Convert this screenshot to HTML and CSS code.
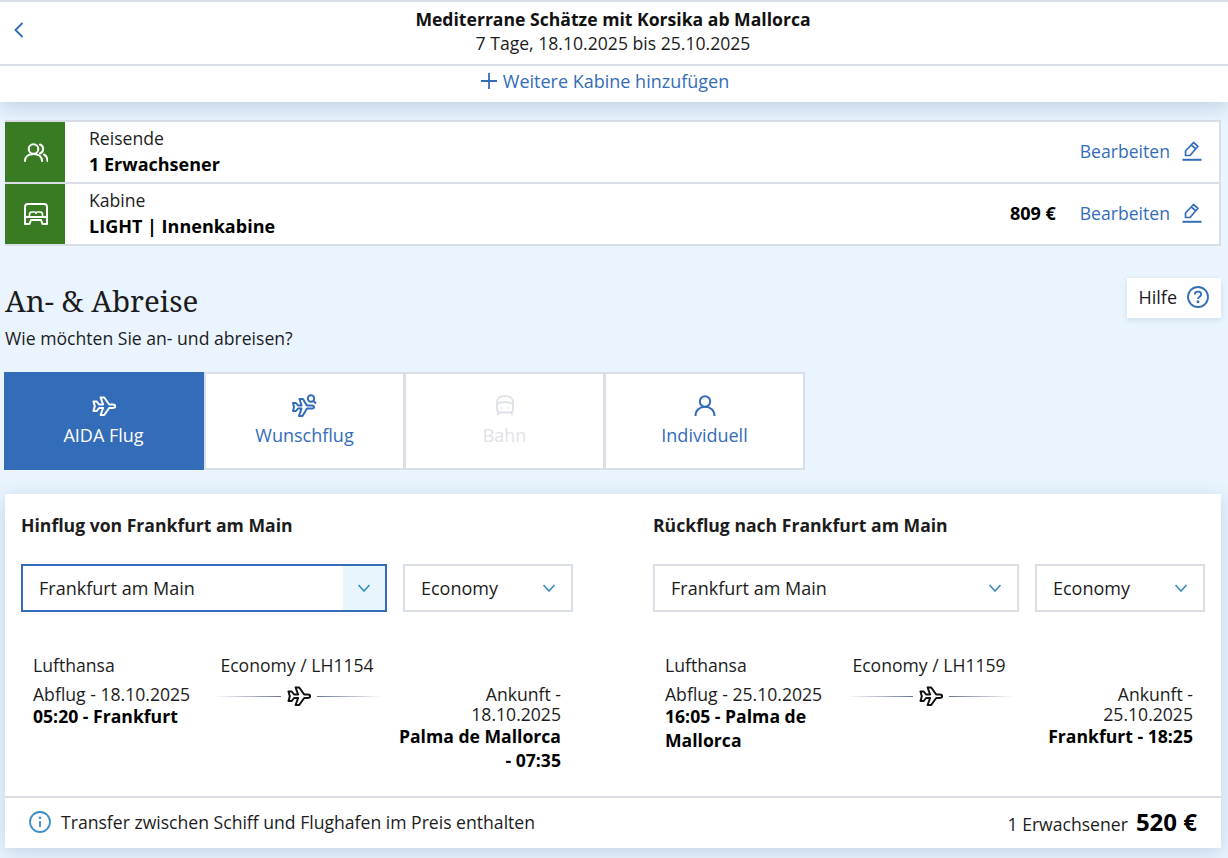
FILE: index.html
```html
<!DOCTYPE html>
<html lang="de">
<head>
  <meta charset="utf-8">
  <title>An- &amp; Abreise</title>
  <link rel="stylesheet" href="styles.css">
</head>
<body>

<svg class="sprite" width="0" height="0">
  <symbol id="i-plane" viewBox="0 0 24 24">
    <path d="M1.500 7.500h3.200l2.400 3h4L8.600 3.500h3.600l5 7h3.300c1.600 0 2.800.7 2.800 1.700s-1.200 1.800-2.800 1.800h-3.300l-5 7H8.600l2.500-7h-4l-2.400 3H1.500l1.300-4.800z" fill="none" stroke="currentColor" stroke-width="2" stroke-linejoin="round"/>
  </symbol>
  <symbol id="i-edit" viewBox="0 0 20 20">
    <path d="M3.500 14.500v-4.500L11.500 1.500l4.500 3.800-8 9.200zM9.300 4l4.500 3.800" fill="none" stroke="currentColor" stroke-width="1.700" stroke-linejoin="round"/>
    <path d="M0.500 18.800h19" stroke="currentColor" stroke-width="2"/>
  </symbol>
  <symbol id="i-chevron" viewBox="0 0 14 14">
    <path d="M1.500 4l5.500 6 5.500-6" fill="none" stroke="currentColor" stroke-width="1.700"/>
  </symbol>
</svg>

<header class="top">
  <div class="top__bar">
    <a class="top__back">
      <svg width="10" height="16" viewBox="0 0 10 16"><path d="M8.500 1L1.500 8l7 7" fill="none" stroke="currentColor" stroke-width="1.900"/></svg>
    </a>
    <div class="top__title">Mediterrane Schätze mit Korsika ab Mallorca</div>
    <div class="top__dates">7 Tage, 18.10.2025 bis 25.10.2025</div>
  </div>
  <a class="top__add">
    <svg width="16" height="16" viewBox="0 0 16 16"><path d="M8 0v16M0 8h16" stroke="currentColor" stroke-width="1.800"/></svg>
    Weitere Kabine hinzufügen
  </a>
</header>

<section class="summary">
  <div class="summary__row">
    <div class="summary__icon">
      <svg width="24" height="20" viewBox="0 0 24 20" fill="none" stroke="currentColor" stroke-width="2" stroke-linecap="round">
        <circle cx="9.500" cy="7" r="4.800"/>
        <path d="M1 19c0-4.500 3.500-7 8.500-7s8.500 2.500 8.500 7"/>
        <path d="M16 2.500a4.800 4.800 0 0 1 0 9M20 12.500c2.300 1.200 3.500 3.500 3.500 6.500"/>
      </svg>
    </div>
    <div class="summary__text">
      <div>Reisende</div>
      <strong>1 Erwachsener</strong>
    </div>
    <a class="edit">Bearbeiten <svg width="20" height="20"><use href="#i-edit"/></svg></a>
  </div>
  <div class="summary__row">
    <div class="summary__icon">
      <svg width="24" height="22" viewBox="0 0 24 22" fill="none" stroke="currentColor" stroke-width="2" stroke-linejoin="round">
        <path d="M1 21V4c0-2 1-3 3-3h16c2 0 3 1 3 3v17h-4.500L17 17H7l-1.500 4z"/>
        <path d="M1 14h22"/>
        <path d="M5.500 14v-2.500C5.500 10 6.500 9 8 9h2.500c1 0 1.500.5 1.500 1.500 0-1 .5-1.500 1.500-1.500H16c1.500 0 2.500 1 2.500 2.500V14" stroke-width="1.600"/>
      </svg>
    </div>
    <div class="summary__text">
      <div>Kabine</div>
      <strong>LIGHT | Innenkabine</strong>
    </div>
    <strong class="summary__price">809 €</strong>
    <a class="edit">Bearbeiten <svg width="20" height="20"><use href="#i-edit"/></svg></a>
  </div>
</section>

<section class="intro">
  <div>
    <h1 class="intro__title">An- &amp; Abreise</h1>
    <p class="intro__sub">Wie möchten Sie an- und abreisen?</p>
  </div>
  <a class="help">
    Hilfe
    <svg width="22" height="22" viewBox="0 0 22 22" fill="none" stroke="currentColor" stroke-width="1.800">
      <circle cx="11" cy="11" r="10"/>
      <path d="M7.800 8.600c0-1.900 1.400-3 3.200-3s3.200 1.100 3.200 2.800c0 2.400-3.200 2.400-3.200 4.600"/>
      <circle cx="11" cy="15.800" r=".6" fill="currentColor"/>
    </svg>
  </a>
</section>

<nav class="tabs">
  <a class="tab tab_active">
    <svg width="24" height="24"><use href="#i-plane"/></svg>
    <span>AIDA Flug</span>
  </a>
  <a class="tab">
    <svg width="26" height="24" viewBox="0 0 26 24" fill="none" stroke="currentColor" stroke-width="2" stroke-linejoin="round">
      <path d="M1 9h3l2 2.500h3.500L7.500 5H11l3.800 6.500h5c1.200 0 2.200.6 2.200 1.500s-1 1.500-2.200 1.500H15L10.500 22H7l2.500-7.500H6L4 17H1l1-4z"/>
      <circle cx="19" cy="4.500" r="3.200"/>
      <path d="M21.500 7l2.500 2.500"/>
    </svg>
    <span>Wunschflug</span>
  </a>
  <a class="tab tab_disabled">
    <svg width="22" height="24" viewBox="0 0 22 24" fill="none" stroke="currentColor" stroke-width="2">
      <path d="M3 8c0-3.500 3-6 8-6s8 2.500 8 6v7c0 2-1.500 3.500-3.500 3.500h-9C4.500 18.500 3 17 3 15z"/>
      <path d="M3 10c2.500-1.500 5-2 8-2s5.500.5 8 2M7 14h1M14 14h1M5 18.500L3.500 21M17 18.500l1.500 2.500"/>
    </svg>
    <span>Bahn</span>
  </a>
  <a class="tab">
    <svg width="22" height="24" viewBox="0 0 22 24" fill="none" stroke="currentColor" stroke-width="2">
      <circle cx="11" cy="7.500" r="5.200"/>
      <path d="M1.500 22c0-5.500 4-9.300 9.500-9.300s9.500 3.800 9.500 9.300"/>
    </svg>
    <span>Individuell</span>
  </a>
</nav>

<section class="card">
  <div class="card__cols">
    <div class="leg">
      <h2 class="leg__title">Hinflug von Frankfurt am Main</h2>
      <div class="leg__selects">
        <div class="select select_focus">Frankfurt am Main <span class="select__arrow"><svg width="14" height="14"><use href="#i-chevron"/></svg></span></div>
        <div class="select select_small">Economy <span class="select__arrow"><svg width="14" height="14"><use href="#i-chevron"/></svg></span></div>
      </div>
      <div class="flight">
        <div class="flight__airline">Lufthansa</div>
        <div class="flight__code">Economy / LH1154</div>
        <div></div>
        <div class="flight__from">Abflug - 18.10.2025<strong>05:20 - Frankfurt</strong></div>
        <div class="flight__line"><svg width="24" height="24"><use href="#i-plane"/></svg></div>
        <div class="flight__to">Ankunft - 18.10.2025<strong>Palma de Mallorca - 07:35</strong></div>
      </div>
    </div>
    <div class="leg">
      <h2 class="leg__title">Rückflug nach Frankfurt am Main</h2>
      <div class="leg__selects">
        <div class="select">Frankfurt am Main <span class="select__arrow"><svg width="14" height="14"><use href="#i-chevron"/></svg></span></div>
        <div class="select select_small">Economy <span class="select__arrow"><svg width="14" height="14"><use href="#i-chevron"/></svg></span></div>
      </div>
      <div class="flight">
        <div class="flight__airline">Lufthansa</div>
        <div class="flight__code">Economy / LH1159</div>
        <div></div>
        <div class="flight__from">Abflug - 25.10.2025<strong>16:05 - Palma de Mallorca</strong></div>
        <div class="flight__line"><svg width="24" height="24"><use href="#i-plane"/></svg></div>
        <div class="flight__to">Ankunft - 25.10.2025<strong>Frankfurt - 18:25</strong></div>
      </div>
    </div>
  </div>
  <footer class="card__foot">
    <svg width="22" height="22" viewBox="0 0 22 22" fill="none" stroke="#3d8fc6" stroke-width="1.800">
      <circle cx="11" cy="11" r="10"/>
      <path d="M11 10v6" stroke-width="1.800"/>
      <circle cx="11" cy="6.800" r=".5" fill="#3d8fc6"/>
    </svg>
    <span class="card__note">Transfer zwischen Schiff und Flughafen im Preis enthalten</span>
    <span class="card__who">1 Erwachsener</span>
    <strong class="card__price">520 €</strong>
  </footer>
</section>

</body>
</html>
```

FILE: styles.css
```css
* {
  box-sizing: border-box;
}

body {
  margin: 0;
  padding-bottom: 10px;
  background: #e9f4fe;
  color: #1c1c1c;
  font-family: "Open Sans", "Noto Sans", sans-serif;
  font-size: 17.6px;
  line-height: 20px;
}

a {
  color: #336db9;
}

strong {
  font-weight: 700;
  color: #000;
}

.sprite {
  display: block;
  height: 0;
}

.top {
  background: #fff;
  border-top: 2px solid #dadee6;
  box-shadow: 0 6px 18px rgba(60, 100, 140, 0.22);
  position: relative;
}

.top__bar {
  position: relative;
  height: 64px;
  padding: 5px 2px 0 0;
  border-bottom: 2px solid #dadee6;
  text-align: center;
}

.top__back {
  position: absolute;
  left: 14px;
  top: 19px;
}

.top__title {
  font-weight: 700;
  line-height: 24px;
  color: #111;
}

.top__dates {
  line-height: 24px;
}

.top__add {
  height: 36px;
  padding: 0 18px 6px 0;
  display: flex;
  align-items: center;
  justify-content: center;
  gap: 6px;
  font-size: 18px;
}

.summary {
  margin: 18px 7px 0 5px;
  background: #fff;
  border-style: solid;
  border-color: #dadee6;
  border-width: 2px 2px 0 0;
}

.summary__row {
  display: flex;
  align-items: center;
  height: 62px;
  border-bottom: 2px solid #dadee6;
}

.summary__icon {
  width: 60px;
  height: 60px;
  padding-left: 2px;
  background: #387b22;
  color: #fff;
  display: flex;
  align-items: center;
  justify-content: center;
}

.summary__text {
  flex: 1;
  margin: -2px 0 0 24px;
  line-height: 26px;
}

.summary__text strong,
.summary__price {
  font-size: 18px;
}

.summary__price {
  margin: -2px 24px 0 0;
}

.edit {
  display: flex;
  align-items: center;
  gap: 12px;
  margin: -2px 17px 0 0;
}

.intro {
  display: flex;
  justify-content: space-between;
  align-items: flex-start;
  margin: 32px 7px 0 5px;
}

.intro__title {
  margin: 3px 0 0;
  font-family: "Noto Serif", "DejaVu Serif", "Liberation Serif", serif;
  font-size: 29.5px;
  font-weight: 400;
  line-height: 40px;
  color: #1c1c1c;
}

.intro__sub {
  margin: 7px 0 0;
}

.help {
  display: flex;
  align-items: center;
  gap: 10px;
  height: 40px;
  padding: 0 12px 2px 11px;
  background: #fff;
  color: #1c1c1c;
  font-size: 18px;
  box-shadow: 0 2px 6px rgba(60, 100, 140, 0.15);
}

.help svg {
  color: #336db9;
}

.tabs {
  display: flex;
  margin: 24px 0 0 4px;
}

.tab {
  width: 200px;
  height: 98px;
  display: flex;
  flex-direction: column;
  align-items: center;
  padding-top: 20px;
  gap: 5px;
  background: #fff;
  border-style: solid;
  border-color: #dadee6;
  border-width: 2px 2px 2px 1px;
  font-size: 18px;
}

.tab:nth-child(2) {
  width: 201px;
  border-left-width: 2px;
}

.tab span {
  line-height: 24px;
}

.tab_active {
  background: #336db9;
  border-color: #336db9;
  color: #fff;
}

.tab_disabled {
  color: #dfe2ea;
}

.card {
  margin: 24px 7px 0 5px;
  background: #fff;
  box-shadow: 0 4px 18px rgba(60, 100, 140, 0.22);
}

.card__cols {
  display: flex;
  gap: 80px;
  padding: 0 16px;
  height: 302px;
}

.leg {
  width: 552px;
}

.leg__title {
  margin: 0;
  padding-top: 19px;
  font-size: 17.6px;
  line-height: 24px;
  font-weight: 700;
  color: #1c1c1c;
}

.leg__selects {
  display: flex;
  gap: 16px;
  margin-top: 27px;
}

.select {
  flex: 1;
  height: 48px;
  display: flex;
  align-items: center;
  justify-content: space-between;
  padding-left: 16px;
  border: 2px solid #dadee6;
  font-size: 18px;
}

.select_small {
  flex: none;
  width: 170px;
}

.select_focus {
  border-color: #336db9;
}

.select__arrow {
  width: 44px;
  height: 44px;
  display: flex;
  align-items: center;
  justify-content: center;
  color: #3d8fc6;
}

.select_focus .select__arrow {
  width: 42px;
  background: #e9f5fc;
}

.flight {
  display: grid;
  grid-template-columns: 183px 166px 1fr;
  margin: 41px 12px 0;
}

.flight__airline,
.flight__code {
  line-height: 24px;
}

.flight__code {
  padding-right: 4px;
  text-align: center;
}

.flight__from,
.flight__to {
  margin-top: 7px;
}

.flight__from strong,
.flight__to strong {
  display: block;
  line-height: 24px;
}

.flight__to {
  padding-left: 12px;
  text-align: right;
}

.flight__line {
  display: flex;
  align-items: center;
  gap: 6px;
  height: 24px;
  margin: 7px 0 0 -1px;
  color: #111;
}

.flight__line::before,
.flight__line::after {
  content: "";
  flex: 1;
  height: 1px;
}

.flight__line::before {
  background: linear-gradient(to right, #fff, #6b7590);
}

.flight__line::after {
  background: linear-gradient(to right, #6b7590, #fff);
}

.card__foot {
  display: flex;
  align-items: center;
  height: 52px;
  padding: 0 24px 2px;
  border-top: 2px solid #dadee6;
}

.card__note {
  flex: 1;
  margin-left: 10px;
}

.card__who {
  margin: 3px 8px 0 0;
}

.card__price {
  font-size: 24px;
}
```
